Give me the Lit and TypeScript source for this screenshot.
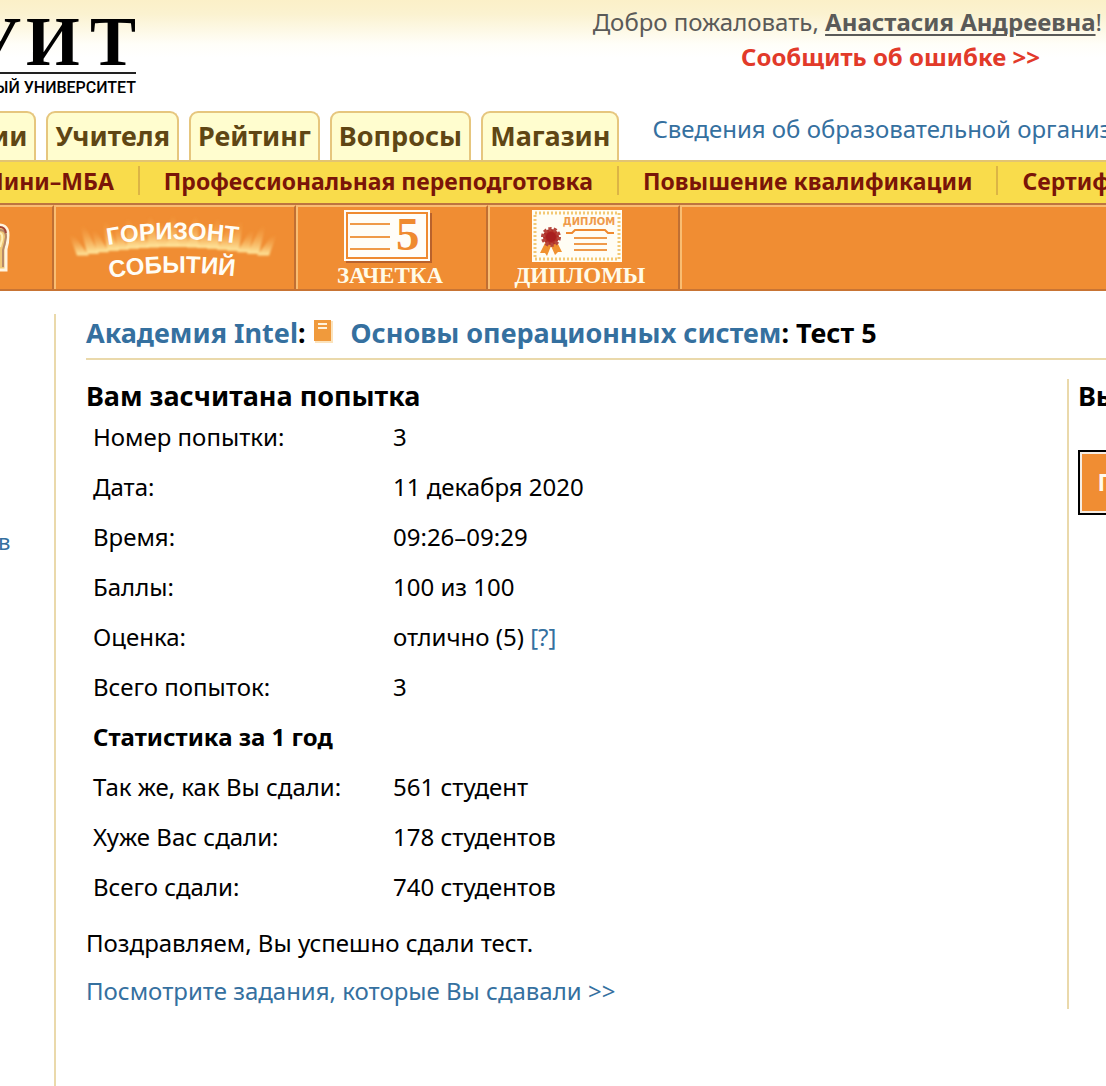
import { LitElement, html, css, svg } from "lit";
import { customElement } from "lit/decorators.js";

const tabs = ["ии", "Учителя", "Рейтинг", "Вопросы", "Магазин"];
const programs = ["Мини–МБА", "Профессиональная переподготовка", "Повышение квалификации", "Сертификация"];

const attempt: [string, string][] = [
  ["Номер попытки:", "3"],
  ["Дата:", "11 декабря 2020"],
  ["Время:", "09:26–09:29"],
  ["Баллы:", "100 из 100"],
  ["Оценка:", "отлично (5)"],
  ["Всего попыток:", "3"],
];
const statistics: [string, string][] = [
  ["Так же, как Вы сдали:", "561 студент"],
  ["Хуже Вас сдали:", "178 студентов"],
  ["Всего сдали:", "740 студентов"],
];

@customElement("site-header")
export class SiteHeader extends LitElement {
  static styles = css`
    :host {
      display: block;
      background: linear-gradient(#fbf0c8 0, #fbf2d0 14px, #fffef8 44px, #fff 58px);
    }
    .top {
      display: flex;
      justify-content: space-between;
      height: 110px;
    }
    .logo {
      width: 144px;
      height: 100px;
      flex: none;
    }
    .mark {
      font: bold 69px "Liberation Serif", serif;
    }
    .motto {
      font: 500 16px Roboto, sans-serif;
    }
    .user {
      padding: 4px 4px 0 0;
      color: #5a5a58;
      white-space: nowrap;
      line-height: 35px;
    }
    .user p {
      margin: 0;
    }
    .name {
      color: inherit;
      font-weight: bold;
      text-underline-offset: 3px;
    }
    .report {
      display: block;
      padding-right: 62px;
      text-align: right;
      color: #e23a2a;
      font-weight: bold;
      text-decoration: none;
    }
    .tabs {
      display: flex;
      gap: 10px;
      height: 50px;
      white-space: nowrap;
    }
    .tab {
      box-sizing: border-box;
      padding: 0 7px;
      border: 2px solid #e6c67e;
      border-bottom: 0;
      border-radius: 9px 9px 0 0;
      background: #fffdcf;
      color: #5f4614;
      font-size: 27px;
      font-weight: bold;
      line-height: 46px;
      text-decoration: none;
      flex: none;
      margin-top: 1px;
    }
    .tab:first-child {
      border-left: 0;
      border-top-left-radius: 0;
      padding-left: 0;
      margin-left: -9px;
    }
    .about {
      margin-left: 23px;
      color: #35709f;
      line-height: 38px;
      text-decoration: none;
    }
  `;
  render() {
    return html`
      <div class="top">
        <svg class="logo" viewBox="0 0 144 100" role="img" aria-label="УИТ">
          <text class="mark" y="65" x="-29 26 90">УИТ</text>
          <path d="M0 73h136" stroke="#222" stroke-width="2" />
          <text class="motto" x="136" y="93" text-anchor="end">ЫЙ УНИВЕРСИТЕТ</text>
        </svg>
        <div class="user">
          <p>Добро пожаловать, <a class="name" href="#profile">Анастасия Андреевна</a>!</p>
          <a class="report" href="#report">Сообщить об ошибке &gt;&gt;</a>
        </div>
      </div>
      <nav class="tabs">
        ${tabs.map((t) => html`<a class="tab" href="#tab">${t}</a>`)}
        <a class="about" href="#about">Сведения об образовательной организации</a>
      </nav>
    `;
  }
}

@customElement("site-menu")
export class SiteMenu extends LitElement {
  static styles = css`
    :host {
      display: block;
    }
    .programs {
      display: flex;
      box-sizing: border-box;
      height: 43px;
      padding-top: 4px;
      border-top: 2px solid #e2c472;
      background: #f9dc4b;
      white-space: nowrap;
    }
    .program {
      flex: none;
      height: 29px;
      padding: 0 24px;
      border-left: 2px solid #dcb545;
      color: #7a1508;
      font-size: 23px;
      font-weight: bold;
      line-height: 30px;
      text-decoration: none;
    }
    .program:first-child {
      margin-left: -44px;
    }
    .sections {
      display: flex;
      box-sizing: border-box;
      height: 88px;
      border-top: 2px solid #bd7440;
      border-bottom: 2px solid #c87434;
      background: #f08d33;
    }
    .section {
      box-sizing: border-box;
      flex: none;
      width: 192px;
      border-top: 2px solid #f9bd72;
      border-right: 2px solid #c06f33;
      border-left: 2px solid #f9bd72;
    }
    .section.edge {
      width: 54px;
      border-left: 0;
    }
    .section.wide {
      width: 242px;
    }
    .section.rest {
      flex: 1;
      border-right: 0;
    }
    .art {
      display: block;
      width: 100%;
      height: 82px;
    }
    .arc {
      font: bold 24px "Liberation Sans", sans-serif;
      fill: #fffdf6;
    }
    .caption {
      font: bold 23px "Liberation Serif", serif;
      fill: #fffbe8;
    }
    .five {
      font: bold 47px "Liberation Serif", serif;
      fill: #ef8a30;
    }
    .diploma {
      font: bold 10px "DejaVu Sans", sans-serif;
      fill: #ef9a4a;
    }
  `;

  private rays() {
    return Array.from({ length: 19 }, (_, i) => {
      const x = 27 + i * 10;
      const side = (x - 117) / 92;
      const base = 40 + side * side * 9;
      const height = (i % 2 ? 32 : 25) - Math.abs(side) * 4;
      return svg`<path d="M${x - 6} ${base}L${x - 2 + side * 12} ${base - height}h4L${x + 6} ${base}Z" fill="url(#glow)" />`;
    });
  }

  render() {
    return html`
      <nav class="programs">
        ${programs.map((p) => html`<a class="program" href="#program">${p}</a>`)}
      </nav>
      <nav class="sections">
        <a class="section edge" href="#trophy" aria-label="Награды">
          <svg class="art" viewBox="0 0 52 82">
            <path d="M-6 19Q8 15 8 28Q8 36 6 42V63H-6" fill="#f0c878" stroke="#fff4df" stroke-width="3" />
            <path d="M0 26Q3 27 2 33L0 40" fill="none" stroke="#fff0b8" stroke-width="2" />
            <path d="M0 23Q6 23 6 30Q5 37 3 43V60" fill="none" stroke="#b88a6a" stroke-width="2" />
            <path d="M0 20Q5 20 6 26" fill="none" stroke="#a54534" stroke-width="2" />
          </svg>
        </a>
        <a class="section wide" href="#horizon">
          <svg class="art" viewBox="0 0 238 82">
            <defs>
              <linearGradient id="glow" x1="0" y1="1" x2="0" y2="0">
                <stop offset="0" stop-color="#ffe9a0" />
                <stop offset="1" stop-color="#f7a84c" stop-opacity="0" />
              </linearGradient>
              <filter id="soft" x="-10%" y="-20%" width="120%" height="140%">
                <feGaussianBlur stdDeviation="1.2" />
              </filter>
              <path id="upper" d="M52 38Q118 26 200 39" />
              <path id="lower" d="M54 71Q118 60 200 72" />
            </defs>
            <g filter="url(#soft)">${this.rays()}</g>
            <text class="arc"><textPath href="#upper">ГОРИЗОНТ</textPath></text>
            <text class="arc"><textPath href="#lower">СОБЫТИЙ</textPath></text>
          </svg>
        </a>
        <a class="section" href="#record">
          <svg class="art" viewBox="0 0 188 82">
            <path d="M48 6h86v50H48z" fill="#b9622c" />
            <path d="M46 3h86v51H46z" fill="#fffdf8" />
            <path d="M49 6h80v45H49z" fill="none" stroke="#ef8a30" stroke-width="2" />
            <path d="M52 17h40M52 30h40M52 42h40" stroke="#ef9a4a" stroke-width="2" />
            <text class="five" x="98" y="43">5</text>
            <text class="caption" x="92" y="76" text-anchor="middle">ЗАЧЕТКА</text>
          </svg>
        </a>
        <a class="section" href="#diplomas">
          <svg class="art" viewBox="0 0 188 82">
            <path d="M42 3h90v52H42z" fill="#fffdf4" />
            <path d="M45 6h84v46H45z" fill="none" stroke="#f3c873" stroke-width="3" stroke-dasharray="2 2" />
            <text class="diploma" x="99" y="18" text-anchor="middle">ДИПЛОМ</text>
            <path d="M76 26h6l3-3h30l3 3h6" fill="none" stroke="#ef8a30" stroke-width="2" />
            <path d="M84 31h33M84 37h33M84 43h33" stroke="#ef9a4a" stroke-width="2" />
            <path d="M55 36L50 46l5 0l2 3l4-10l4 9l3-3l4 0L67 35Z" fill="#f0912f" />
            <circle cx="61" cy="30" r="8" fill="#b32f27" stroke="#b5453b" stroke-width="4" stroke-dasharray="3 2" />
            <circle cx="61" cy="30" r="5" fill="#a81f1f" />
            <text class="caption" x="90" y="76" text-anchor="middle">ДИПЛОМЫ</text>
          </svg>
        </a>
        <div class="section rest"></div>
      </nav>
    `;
  }
}

@customElement("test-result")
export class TestResult extends LitElement {
  static styles = css`
    :host {
      display: block;
      padding: 0 0 77px 30px;
    }
    a {
      color: #35709f;
      text-decoration: none;
    }
    h1,
    h2 {
      margin: 0;
      font-size: 27px;
      line-height: 34px;
    }
    h1 {
      padding: 2px 0 8px;
      border-bottom: 2px solid #ead9ab;
      white-space: nowrap;
    }
    .book {
      width: 20px;
      height: 24px;
      margin: 0 18px 0 0;
    }
    .columns {
      display: flex;
      padding-top: 19px;
    }
    .report {
      flex: 1;
      min-width: 0;
    }
    .aside {
      box-sizing: border-box;
      flex: none;
      width: 39px;
      height: 630px;
      padding-left: 9px;
      border-left: 2px solid #ead9ab;
      overflow: hidden;
      white-space: nowrap;
    }
    .again {
      height: 65px;
      margin-top: 37px;
      padding: 0 18px;
      border: 2px solid #000;
      background: #f08d33;
      box-shadow: inset 0 0 0 2px #f6ede4;
      color: #fffbee;
      font: bold 24px "Liberation Sans", sans-serif;
    }
    table {
      border-spacing: 0;
      margin-bottom: 6px;
      line-height: 30px;
    }
    th,
    td {
      height: 50px;
      padding: 0 0 2px 7px;
      box-sizing: border-box;
      text-align: left;
      font-weight: normal;
    }
    th {
      width: 300px;
    }
    .group {
      font-weight: bold;
    }
    p {
      margin: 0;
      line-height: 48px;
    }
  `;

  render() {
    const row = ([label, value]: [string, string]) => html`
      <tr>
        <th scope="row">${label}</th>
        <td>${value}${label === "Оценка:" ? html` <a href="#grades">[?]</a>` : ""}</td>
      </tr>
    `;
    return html`
      <h1>
        <a href="#academy">Академия Intel</a>:
        <svg class="book" viewBox="0 0 20 24" aria-hidden="true">
          <path d="M2 2h18v22H2z" fill="#fbe3bd" />
          <path d="M1 1h17v21H1z" fill="#f09a3c" />
          <path d="M5 5h9M5 9h9" stroke="#fff3dc" stroke-width="2" />
        </svg><a href="#course">Основы операционных систем</a>: Тест 5
      </h1>
      <div class="columns">
        <section class="report">
          <h2>Вам засчитана попытка</h2>
          <table>
            <tbody>
              ${attempt.map(row)}
              <tr><th class="group" colspan="2" scope="rowgroup">Статистика за 1 год</th></tr>
              ${statistics.map(row)}
            </tbody>
          </table>
          <p>Поздравляем, Вы успешно сдали тест.</p>
          <p><a href="#answers">Посмотрите задания, которые Вы сдавали &gt;&gt;</a></p>
        </section>
        <aside class="aside">
          <h2>Вы</h2>
          <button class="again" type="button">П</button>
        </aside>
      </div>
    `;
  }
}

@customElement("app-root")
export class AppRoot extends LitElement {
  static styles = css`
    :host {
      display: flex;
      flex-direction: column;
      min-height: 100vh;
      overflow: hidden;
      background: #fff;
      color: #000;
      font: 24px "Noto Sans", "Open Sans", sans-serif;
    }
    .body {
      display: flex;
      flex: 1;
      padding-top: 23px;
    }
    .side {
      box-sizing: border-box;
      flex: none;
      width: 56px;
      padding-top: 210px;
      border-right: 2px solid #ead9ab;
    }
    .lesson {
      margin-left: -2px;
      color: #35709f;
      font-size: 22px;
      line-height: 30px;
      text-decoration: none;
    }
    .main {
      flex: 1;
      min-width: 0;
    }
  `;
  render() {
    return html`
      <site-header></site-header>
      <site-menu></site-menu>
      <div class="body">
        <nav class="side"><a class="lesson" href="#lesson">в</a></nav>
        <test-result class="main"></test-result>
      </div>
    `;
  }
}
